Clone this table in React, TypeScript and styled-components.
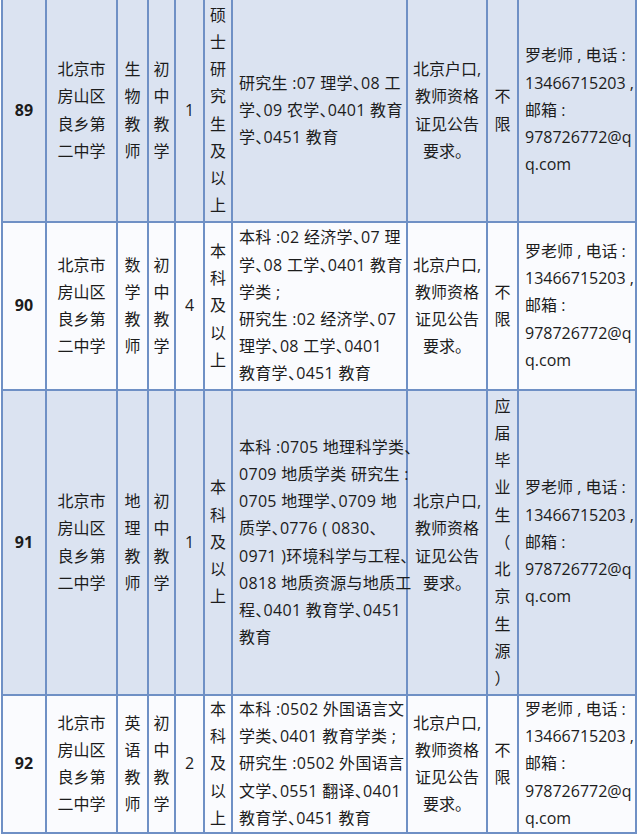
import React from "react";
import styled, { createGlobalStyle } from "styled-components";

const GlobalStyle = createGlobalStyle`
  html, body { margin: 0; padding: 0; background: #ffffff; }
  body { font-family: "Open Sans", "Noto Sans CJK SC", sans-serif; }
`;

const Page = styled.div`
  width: 640px;
  overflow: hidden;
`;

const Table = styled.table`
  margin-left: 1px;
  width: 634px;
  border-collapse: collapse;
  table-layout: fixed;
  font-family: "Open Sans", "Noto Sans CJK SC", sans-serif;
  font-size: 16px;
  line-height: 27.2px;
  color: #1c1c1c;
`;

const Row = styled.tr<{ $shade: boolean; $h: number }>`
  height: ${(p) => p.$h}px;
  background: ${(p) => (p.$shade ? "#dbe3f1" : "#fafbfe")};
  &:first-child td { border-top: none; }
`;

const Cell = styled.td<{ $align?: "left" | "center"; $bold?: boolean }>`
  border: 2px solid #6f90c5;
  padding: 0;
  padding-left: ${(p) => (p.$align === "left" ? "6px" : "0")};
  text-align: ${(p) => p.$align ?? "center"};
  vertical-align: middle;
  font-weight: ${(p) => (p.$bold ? 700 : 400)};
  white-space: nowrap;
  overflow: visible;
`;

const TextCell = styled(Cell)`
  font-feature-settings: "halt";
  letter-spacing: 0.3px;
`;

const Line = styled.span`
  display: block;
`;

type Rec = {
  no: string;
  shade: boolean;
  h: number;
  post: string;
  count: string;
  edu: string;
  major: string[];
  other: string;
};

const school = ["北京市", "房山区", "良乡第", "二中学"];
const req = ["北京户口,", "教师资格", "证见公告", "要求。"];
const contact = ["罗老师 , 电话 :", "13466715203 ,", "邮箱 :", "978726772@q", "q.com"];

const rows: Rec[] = [
  {
    no: "89",
    shade: true,
    h: 222,
    post: "生物教师",
    count: "1",
    edu: "硕士研究生及以上",
    major: ["研究生 :07 理学、08 工", "学、09 农学、0401 教育", "学、0451 教育"],
    other: "不限",
  },
  {
    no: "90",
    shade: false,
    h: 168,
    post: "数学教师",
    count: "4",
    edu: "本科及以上",
    major: [
      "本科 :02 经济学、07 理",
      "学、08 工学、0401 教育",
      "学类 ;",
      "研究生 :02 经济学、07",
      "理学、08 工学、0401",
      "教育学、0451 教育",
    ],
    other: "不限",
  },
  {
    no: "91",
    shade: true,
    h: 305,
    post: "地理教师",
    count: "1",
    edu: "本科及以上",
    major: [
      "本科 :0705 地理科学类、",
      "0709 地质学类 研究生 :",
      "0705 地理学、0709 地",
      "质学、0776 ( 0830、",
      "0971 )环境科学与工程、",
      "0818 地质资源与地质工",
      "程、0401 教育学、0451",
      "教育",
    ],
    other: "应届毕业生（北京生源）",
  },
  {
    no: "92",
    shade: false,
    h: 138,
    post: "英语教师",
    count: "2",
    edu: "本科及以上",
    major: [
      "本科 :0502 外国语言文",
      "学类、0401 教育学类 ;",
      "研究生 :0502 外国语言",
      "文学、0551 翻译、0401",
      "教育学、0451 教育",
    ],
    other: "不限",
  },
];

const Lines = ({ items }: { items: string[] }) => (
  <>
    {items.map((t, i) => (
      <Line key={i}>{t}</Line>
    ))}
  </>
);

const chars = (s: string) => Array.from(s);

export default function App() {
  return (
    <Page>
      <GlobalStyle />
      <Table>
        <colgroup>
          {[44, 71, 31, 27, 29, 28, 175, 80, 31, 118].map((w, i) => (
            <col key={i} style={{ width: w }} />
          ))}
        </colgroup>
        <tbody>
          {rows.map((r) => (
            <Row key={r.no} $shade={r.shade} $h={r.h}>
              <Cell $bold>{r.no}</Cell>
              <Cell>
                <Lines items={school} />
              </Cell>
              <Cell>
                <Lines items={chars(r.post)} />
              </Cell>
              <Cell>
                <Lines items={chars("初中教学")} />
              </Cell>
              <Cell>{r.count}</Cell>
              <Cell>
                <Lines items={chars(r.edu)} />
              </Cell>
              <TextCell $align="left">
                <Lines items={r.major} />
              </TextCell>
              <Cell>
                <Lines items={req} />
              </Cell>
              <Cell>
                <Lines items={chars(r.other)} />
              </Cell>
              <Cell $align="left">
                <Lines items={contact} />
              </Cell>
            </Row>
          ))}
        </tbody>
      </Table>
    </Page>
  );
}
